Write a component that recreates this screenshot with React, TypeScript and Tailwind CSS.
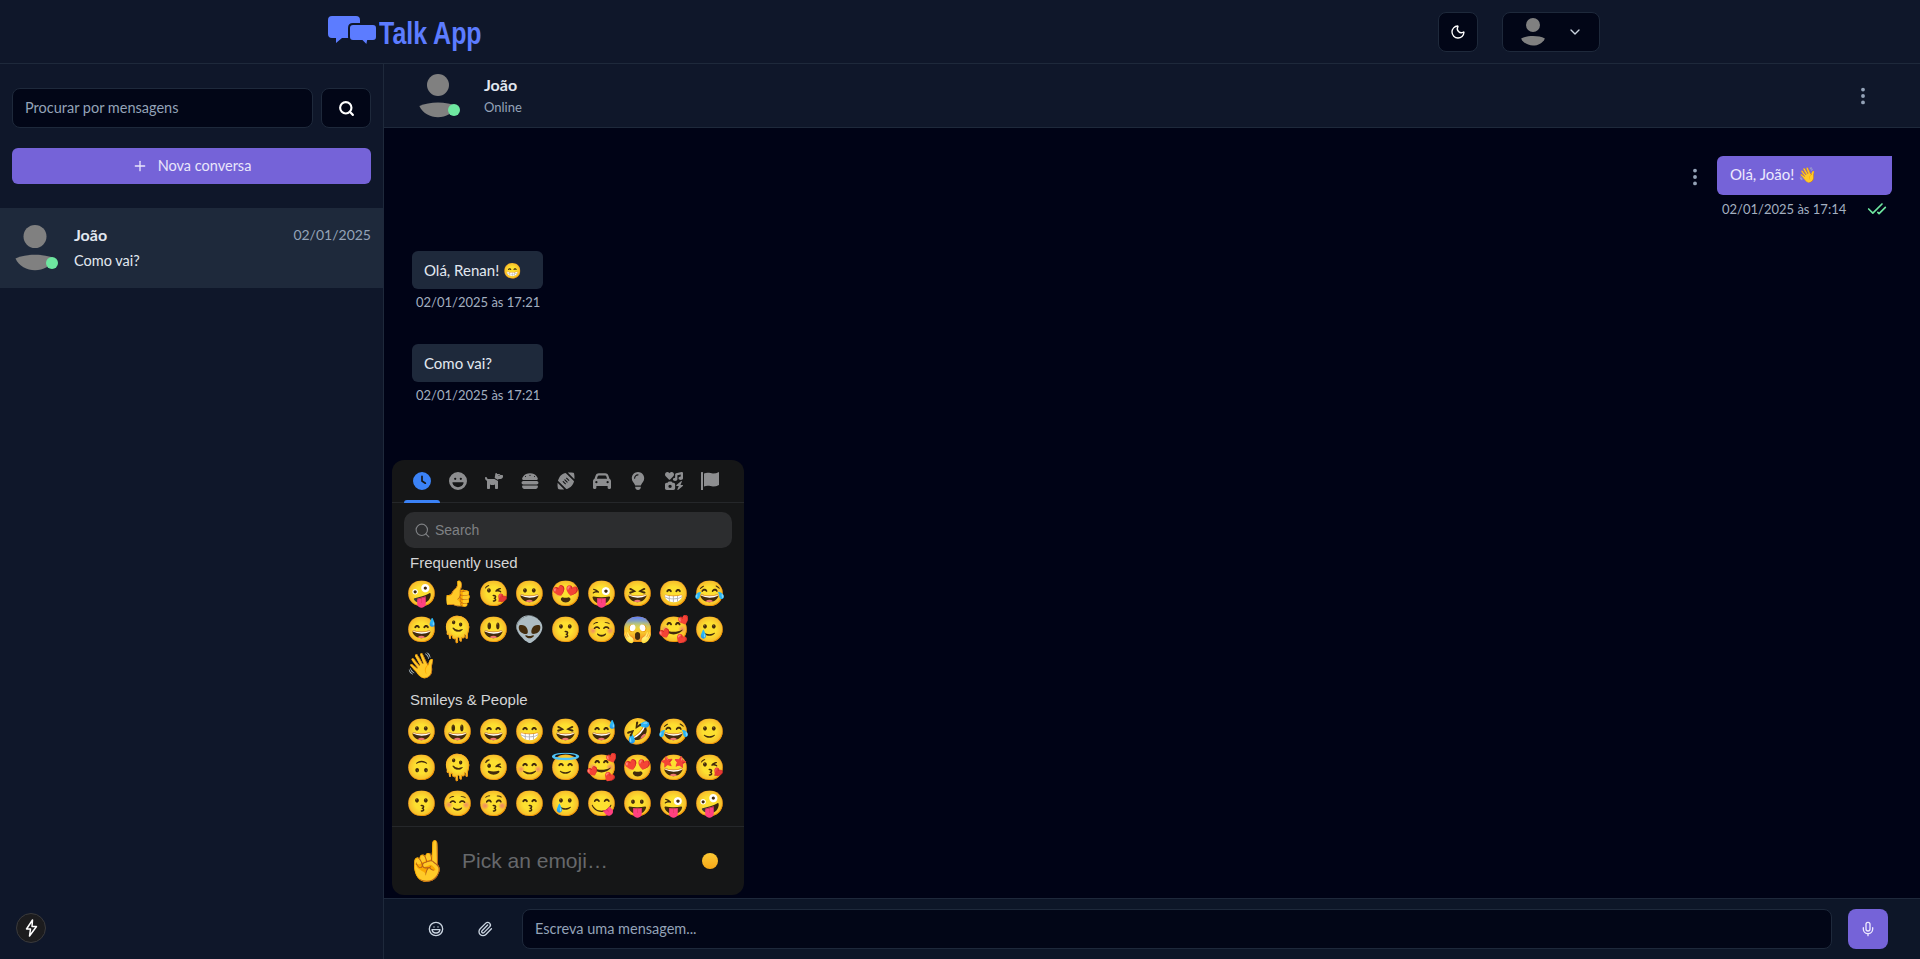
import { CheckCheck, ChevronDown, EllipsisVertical, Laugh, Mic, Moon, Paperclip, Plus, Search } from "lucide-react";
import { FaBurger, FaCar, FaClock, FaDog, FaFaceLaugh, FaFootball, FaIcons, FaLightbulb } from "react-icons/fa6";

const frequent = ["🤪", "👍", "😘", "😀", "😍", "😜", "😆", "😁", "😂", "😅", "🫠", "😃", "👽", "😗", "☺️", "😱", "🥰", "🥲", "👋"];
const smileys = ["😀", "😃", "😄", "😁", "😆", "😅", "🤣", "😂", "🙂", "🙃", "🫠", "😉", "😊", "😇", "🥰", "😍", "🤩", "😘", "😗", "☺️", "😚", "😙", "🥲", "😋", "😛", "😜", "🤪"];

function FlagIcon({ size = 18 }: { size?: number }) {
    return (
        <svg width={size} height={size} viewBox="0 0 18 18" fill="currentColor">
            <rect x="0" y="0" width="2" height="18" rx="0.5" />
            <path d="M3 1.5 C 7 0, 9.5 1.5, 12 1.5 C 14 1.5, 16 1, 18 0 V13 C 16 14, 14 14.5, 12 14.5 C 9.5 14.5, 7 13, 3 14.5 Z" />
        </svg>
    );
}

const tabs = [FaClock, FaFaceLaugh, FaDog, FaBurger, FaFootball, FaCar, FaLightbulb, FaIcons, FlagIcon];

function Avatar({ size = 46, online = false }: { size?: number; online?: boolean }) {
    return (
        <div className="relative shrink-0" style={{ width: size, height: size }}>
            <svg viewBox="0 0 46 46" width={size} height={size}>
                <circle cx="23" cy="11.5" r="11.5" fill="#808080" />
                <path d="M3.5 33.5 C 14 28.5, 32 28.5, 42.5 33.5 C 36 49, 10 49, 3.5 33.5 Z" fill="#808080" />
            </svg>
            {online && <span className="absolute right-0 bottom-[2px] w-3 h-3 rounded-full bg-[#6ee7a0]" />}
        </div>
    );
}

function Logo() {
    return (
        <div className="flex items-center -mt-[2px]">
            <svg width="49" height="30" viewBox="0 0 49 30" className="shrink-0">
                <path d="M4 0 H28 Q32 0 32 4 V18 Q32 22 28 22 H14 L8 27 L8 22 H4 Q0 22 0 18 V4 Q0 0 4 0 Z" fill="#5c7cff" />
                <path d="M25 8 H45 Q49 8 49 12 V21 Q49 25 45 25 H40 L39 30 L34 25 H25 Q21 25 21 21 V12 Q21 8 25 8 Z" fill="#5c7cff" stroke="#0f172a" strokeWidth="2" />
            </svg>
            <span className="ml-[2px] mt-[4px] text-[32px] leading-none font-bold text-[#5c7cff] font-['Liberation_Sans',sans-serif] whitespace-nowrap origin-left scale-x-[0.78]">Talk App</span>
        </div>
    );
}

function Bubble({ text, time }: { text: string; time: string }) {
    return (
        <div className="flex flex-col items-start w-[131px]">
            <div className="w-full h-[38px] flex items-center pl-3 rounded-md bg-[#1e293b] text-[15px] text-[#e2e8f0]">{text}</div>
            <div className="mt-[4px] pl-1 text-[13px] leading-[18px] text-[#a3afc0] whitespace-nowrap">{time}</div>
        </div>
    );
}

function EmojiGrid({ items }: { items: string[] }) {
    return (
        <div className="grid grid-cols-[repeat(9,36px)] px-[12px]">
            {items.map((e, i) => (
                <span key={i} className="h-9 flex items-center justify-center text-[25px] leading-none font-['Noto_Color_Emoji',sans-serif]">{e}</span>
            ))}
        </div>
    );
}

function EmojiPicker() {
    return (
        <div className="absolute left-[8px] bottom-[3px] w-[352px] h-[435px] rounded-xl bg-[#151617] flex flex-col overflow-hidden font-['Liberation_Sans',sans-serif]">
            <div className="flex px-3 h-[43px] border-b border-[#25272a] shrink-0">
                {tabs.map((Icon, i) => (
                    <div key={i} className={`w-9 flex items-center justify-center relative ${i === 0 ? "text-[#3b82f6]" : "text-[#8d8e90]"}`}>
                        <Icon size={18} />
                        {i === 0 && <span className="absolute left-0 right-0 bottom-[-1px] h-[3px] rounded-t bg-[#3b82f6]" />}
                    </div>
                ))}
            </div>
            <div className="mx-3 mt-[9px] h-9 shrink-0 rounded-[10px] bg-[#2c2d2f] flex items-center gap-[4px] pl-[10px] text-[14px] text-[#7f8184]">
                <Search size={17} strokeWidth={1.6} />
                <span>Search</span>
            </div>
            <div className="flex-1 overflow-hidden">
                <div className="px-[18px] mt-[4px] h-[21px] leading-[21px] text-[15px] text-[#d4d5d6]">Frequently used</div>
                <div className="mt-[2px]"><EmojiGrid items={frequent} /></div>
                <div className="px-[18px] mt-[6px] h-[21px] leading-[21px] text-[15px] text-[#d4d5d6]">Smileys &amp; People</div>
                <div className="mt-[3px]"><EmojiGrid items={smileys} /></div>
            </div>
            <div className="h-[69px] shrink-0 border-t border-[#25272a] flex items-center pl-[12px] pr-[26px]">
                <span className="text-[38px] leading-none w-[58px] font-['Noto_Color_Emoji',sans-serif]">☝️</span>
                <span className="flex-1 text-[21px] text-[#66686b]">Pick an emoji…</span>
                <span className="w-4 h-4 rounded-full bg-linear-to-b from-[#fcc934] to-[#f5a716]" />
            </div>
        </div>
    );
}

export default function App() {
    return (
        <div className="h-screen flex flex-col bg-[#0f172a] text-white font-['Lato',sans-serif] overflow-hidden">
            <header className="h-[64px] shrink-0 border-b border-[#1e293b] flex items-center justify-between pl-[328px] pr-[320px]">
                <Logo />
                <div className="flex items-center gap-6">
                    <button className="w-10 h-10 rounded-lg bg-[#020617] border border-[#1e293b] flex items-center justify-center">
                        <Moon size={16} />
                    </button>
                    <button className="w-[98px] h-10 rounded-lg bg-[#020617] border border-[#1e293b] flex items-center pl-4 gap-5">
                        <Avatar size={28} />
                        <ChevronDown size={16} className="text-[#cbd5e1]" />
                    </button>
                </div>
            </header>

            <div className="flex-1 flex min-h-0">
                <aside className="w-[384px] shrink-0 border-r border-[#1e293b] flex flex-col relative">
                    <div className="px-3 pt-6 flex gap-2">
                        <div className="flex-1 h-10 rounded-lg bg-[#020617] border border-[#1e293b] flex items-center pl-3 text-[14.5px] text-[#94a3b8]">Procurar por mensagens</div>
                        <button className="w-[50px] h-10 rounded-lg bg-[#020617] border border-[#1e293b] flex items-center justify-center">
                            <Search size={17} strokeWidth={3} />
                        </button>
                    </div>
                    <div className="px-3 mt-[20px]">
                        <button className="w-full h-9 rounded-md bg-[#7563d8] flex items-center justify-center gap-[10px] text-[14.5px] text-[#e9e6fb]">
                            <Plus size={16} />
                            Nova conversa
                        </button>
                    </div>
                    <div className="mt-6 h-20 bg-[#1e293b] flex px-3 items-center">
                        <Avatar size={46} online />
                        <div className="flex-1 ml-[16px] -mt-[2px]">
                            <div className="flex justify-between items-center">
                                <span className="text-[16px] font-bold text-[#e2e8f0]">João</span>
                                <span className="text-[14px] text-[#94a3b8]">02/01/2025</span>
                            </div>
                            <div className="mt-[3px] text-[14.5px] text-[#e2e8f0]">Como vai?</div>
                        </div>
                    </div>
                    <button className="absolute left-[16px] bottom-[16px] w-[30px] h-[30px] rounded-full bg-[#1c1c1e] border border-[#3a3a3c] flex items-center justify-center">
                        <svg width="13" height="18" viewBox="0 0 13 18" fill="none" stroke="white" strokeWidth="1.5" strokeLinejoin="round">
                            <path d="M7.5 1 L1.5 10 H5.5 L4.5 17 L11.5 7.5 H7 Z" />
                        </svg>
                    </button>
                </aside>

                <main className="flex-1 flex flex-col min-w-0">
                    <div className="h-[64px] shrink-0 border-b border-[#1e293b] flex items-center pl-[32px] pr-[46px]">
                        <Avatar size={44} online />
                        <div className="ml-[24px] flex-1 -mt-[2px]">
                            <div className="text-[16px] leading-6 font-bold text-[#e2e8f0]">João</div>
                            <div className="text-[13px] leading-5 text-[#94a3b8]">Online</div>
                        </div>
                        <EllipsisVertical size={22} strokeWidth={2.2} className="text-[#94a3b8]" />
                    </div>

                    <div className="flex-1 relative bg-[#000316] min-h-0 px-7 pt-7">
                        <div className="flex justify-end">
                            <div className="flex items-start gap-[11px]">
                                <EllipsisVertical size={22} strokeWidth={2.2} className="text-[#94a3b8] mt-[10px]" />
                                <div className="w-[175px]">
                                    <div className="h-[39px] flex items-center pl-[13px] pb-[2px] rounded-l-md rounded-br-md bg-[#7563d8] text-[15px] text-[#ede9fe]">Olá, João! 👋</div>
                                    <div className="mt-[4px] flex items-center justify-between pl-[5px] pr-[5px] text-[13px] leading-[18px] text-[#a3afc0]">
                                        <span>02/01/2025 às 17:14</span>
                                        <CheckCheck size={20} className="text-[#6ee7a0]" />
                                    </div>
                                </div>
                            </div>
                        </div>
                        <div className="mt-[32px]"><Bubble text="Olá, Renan! 😁" time="02/01/2025 às 17:21" /></div>
                        <div className="mt-[33px]"><Bubble text="Como vai?" time="02/01/2025 às 17:21" /></div>
                        <EmojiPicker />
                    </div>

                    <div className="h-[61px] shrink-0 border-t border-[#1e293b] bg-[#0d1628] flex items-center pl-[34px] pr-[32px]">
                        <button className="w-[36px] flex justify-center text-[#cbd5e1]"><Laugh size={16} /></button>
                        <button className="w-[36px] ml-[13px] flex justify-center text-[#cbd5e1]"><Paperclip size={16} /></button>
                        <div className="flex-1 ml-[19px] h-10 rounded-lg bg-[#020617] border border-[#1e293b] flex items-center pl-3 text-[14.5px] text-[#94a3b8]">Escreva uma mensagem...</div>
                        <button className="ml-4 w-10 h-10 rounded-lg bg-[#7563d8] flex items-center justify-center text-[#ede9fe]"><Mic size={16} /></button>
                    </div>
                </main>
            </div>
        </div>
    );
}
